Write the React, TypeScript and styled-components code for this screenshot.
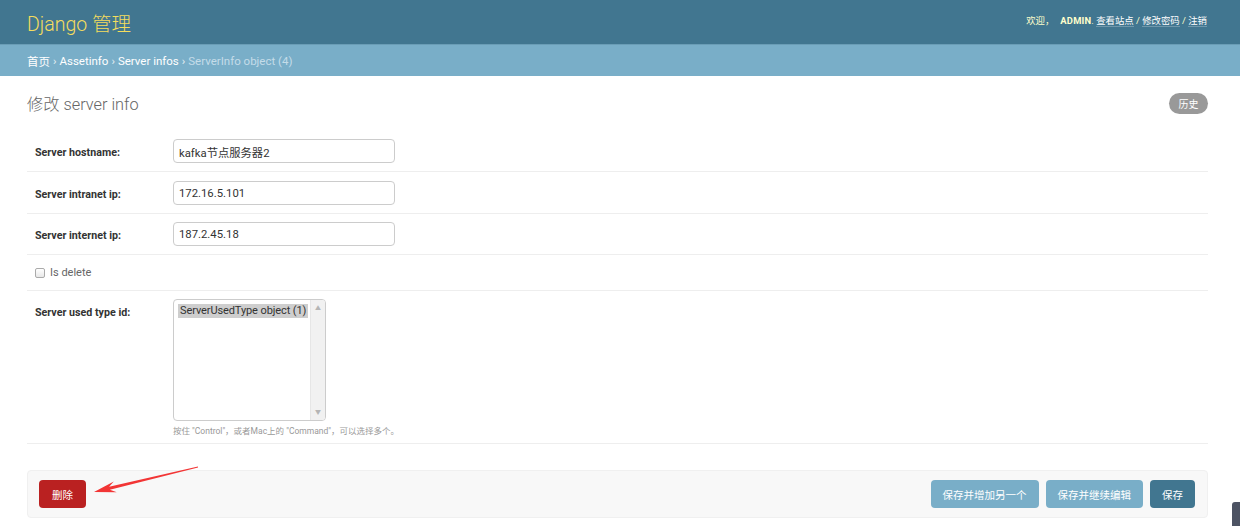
import React from "react";
import styled, { createGlobalStyle } from "styled-components";

const GlobalStyle = createGlobalStyle`
  html, body { margin: 0; padding: 0; background: #fff; }
  body {
    font-family: Roboto, "Noto Sans CJK SC", "Lucida Grande", Verdana, sans-serif;
    color: #333;
  }
  * { box-sizing: border-box; }
`;

const Page = styled.div`
  position: relative;
  width: 1240px;
  height: 526px;
  overflow: hidden;
`;

const Header = styled.header`
  height: 44px;
  background: #417690;
  display: flex;
  align-items: center;
  justify-content: space-between;
  padding: 0 33px 0 27px;
`;

const Branding = styled.h1`
  margin: 1px 0 0;
  font-size: 19.5px;
  font-weight: 300;
  color: #f5dd5d;
`;

const UserTools = styled.div`
  font-size: 9.4px;
  color: #ffc;
  margin-top: -4px;
  strong {
    font-weight: 700;
    text-transform: uppercase;
    margin-left: 6px;
    letter-spacing: 0.2px;
  }
`;

const ToolLink = styled.a`
  color: #fff;
  text-decoration: none;
  border-bottom: 1px solid rgba(255, 255, 255, 0.25);
`;

const Breadcrumbs = styled.nav`
  height: 32px;
  background: #79aec8;
  color: #c4dce8;
  font-size: 11.5px;
  display: flex;
  align-items: center;
  padding: 1px 27px 0;
  border-top: 1px solid #6a9db6;
`;

const Crumb = styled.a`
  color: #fff;
  text-decoration: none;
`;

const Sep = styled.span`
  margin: 0 3px;
  color: #e4eef3;
`;

const Content = styled.main`
  padding: 0 32px 0 27px;
`;

const TitleRow = styled.div`
  height: 55px;
  display: flex;
  align-items: center;
  justify-content: space-between;
`;

const Title = styled.h2`
  margin: -2px 0 0;
  font-size: 16.3px;
  font-weight: 300;
  color: #666;
`;

const HistoryButton = styled.a`
  display: inline-flex;
  align-items: center;
  justify-content: center;
  height: 21px;
  width: 39px;
  border-radius: 11px;
  background: #999;
  color: #fff;
  font-size: 10px;
`;

const Fieldset = styled.fieldset`
  margin: 0;
  padding: 0;
  border: none;
  min-width: 0;
`;

const FormRow = styled.div<{ $pad?: string }>`
  display: flex;
  align-items: flex-start;
  padding: ${(p) => p.$pad || "8px 8px"};
  border-bottom: 1px solid #eee;
`;

const Label = styled.label`
  width: 138px;
  height: 24px;
  flex: none;
  font-size: 10.7px;
  font-weight: 700;
  color: #333;
  line-height: 24px;
  padding-top: 2px;
`;

const TextInput = styled.div`
  width: 222px;
  height: 24px;
  border: 1px solid #ccc;
  border-radius: 4px;
  padding: 1px 5px 0;
  display: flex;
  align-items: center;
  font-size: 11.3px;
  color: #333;
`;

const CheckLabel = styled.label`
  display: flex;
  align-items: center;
  gap: 5px;
  font-size: 11px;
  color: #666;
  height: 19px;
`;

const Box = styled.span`
  width: 10px;
  height: 10px;
  border: 1px solid #aaa;
  border-radius: 2px;
  background: linear-gradient(#fff, #e8e8e8);
`;

const FieldCol = styled.div`
  display: flex;
  flex-direction: column;
`;

const ListBox = styled.div`
  width: 153px;
  height: 122px;
  border: 1px solid #ccc;
  border-radius: 4px;
  display: flex;
  overflow: hidden;
`;

const Options = styled.div`
  flex: 1;
  padding: 4px 4px;
  overflow: hidden;
  line-height: 14px;
`;

const Option = styled.div<{ $selected?: boolean }>`
  display: block;
  width: max-content;
  white-space: nowrap;
  font-size: 11px;
  line-height: 14px;
  letter-spacing: -0.1px;
  color: #333;
  padding: 0 2px;
  background: ${(p) => (p.$selected ? "#cecece" : "transparent")};
`;

const ScrollTrack = styled.div`
  width: 15px;
  background: #f1f1f1;
  border-left: 1px solid #e6e6e6;
  display: flex;
  flex-direction: column;
  justify-content: space-between;
  align-items: center;
  padding: 4px 0;
  color: #b5b5b5;
  font-size: 6px;
  line-height: 8px;
`;

const Help = styled.p`
  margin: 4px 0 0;
  font-size: 8.5px;
  color: #999;
  line-height: 12px;
`;

const SubmitRow = styled.div`
  margin-top: 26px;
  background: #f8f8f8;
  border: 1px solid #f0f0f0;
  border-radius: 4px;
  padding: 9px 12px 9px 11px;
  display: flex;
  align-items: center;
  gap: 7px;
`;

const Button = styled.a<{ $variant: "delete" | "secondary" | "primary" }>`
  height: 28px;
  display: inline-flex;
  align-items: center;
  justify-content: center;
  padding: 0 ${(p) => (p.$variant === "delete" ? "13px" : "12px")};
  border-radius: 4px;
  font-size: 10.5px;
  color: #fff;
  background: ${(p) =>
    p.$variant === "delete" ? "#ba2121" : p.$variant === "primary" ? "#417690" : "#79aec8"};
`;

const Spacer = styled.div`
  flex: 1;
`;

const ArrowOverlay = styled.svg`
  position: absolute;
  left: 0;
  top: 0;
  pointer-events: none;
`;

const CornerTab = styled.div`
  position: absolute;
  right: 0;
  bottom: 0;
  width: 8px;
  height: 24px;
  background: #4d5363;
  border-radius: 3px 0 0 0;
`;

export default function App() {
  return (
    <Page>
      <GlobalStyle />
      <Header>
        <Branding>Django 管理</Branding>
        <UserTools>
          欢迎，<strong>admin</strong>. <ToolLink>查看站点</ToolLink> / <ToolLink>修改密码</ToolLink> /{" "}
          <ToolLink>注销</ToolLink>
        </UserTools>
      </Header>
      <Breadcrumbs>
        <Crumb>首页</Crumb>
        <Sep>›</Sep>
        <Crumb>Assetinfo</Crumb>
        <Sep>›</Sep>
        <Crumb>Server infos</Crumb>
        <Sep>›</Sep>
        <span>ServerInfo object (4)</span>
      </Breadcrumbs>
      <Content>
        <TitleRow>
          <Title>修改 server info</Title>
          <HistoryButton>历史</HistoryButton>
        </TitleRow>
        <Fieldset>
          <FormRow>
            <Label>Server hostname:</Label>
            <TextInput>kafka节点服务器2</TextInput>
          </FormRow>
          <FormRow $pad="9px 8px 8px">
            <Label>Server intranet ip:</Label>
            <TextInput>172.16.5.101</TextInput>
          </FormRow>
          <FormRow $pad="8px 8px 8px">
            <Label>Server internet ip:</Label>
            <TextInput>187.2.45.18</TextInput>
          </FormRow>
          <FormRow $pad="8px 8px 8px">
            <CheckLabel>
              <Box />
              Is delete
            </CheckLabel>
          </FormRow>
          <FormRow $pad="8px 8px 6px">
            <Label>Server used type id:</Label>
            <FieldCol>
              <ListBox>
                <Options>
                  <Option $selected>ServerUsedType object (1)</Option>
                </Options>
                <ScrollTrack>
                  <span>▲</span>
                  <span>▼</span>
                </ScrollTrack>
              </ListBox>
              <Help>按住 "Control"，或者Mac上的 "Command"，可以选择多个。</Help>
            </FieldCol>
          </FormRow>
        </Fieldset>
        <SubmitRow>
          <Button $variant="delete">删除</Button>
          <Spacer />
          <Button $variant="secondary">保存并增加另一个</Button>
          <Button $variant="secondary">保存并继续编辑</Button>
          <Button $variant="primary">保存</Button>
        </SubmitRow>
      </Content>
      <ArrowOverlay width="1240" height="526" viewBox="0 0 1240 526">
        <polygon
          points="198,466.5 109.1,486.7 113.8,481.6 94,492 116.8,492.2 109.9,489.7 198,467.5"
          fill="#f23535"
        />
      </ArrowOverlay>
      <CornerTab />
    </Page>
  );
}
